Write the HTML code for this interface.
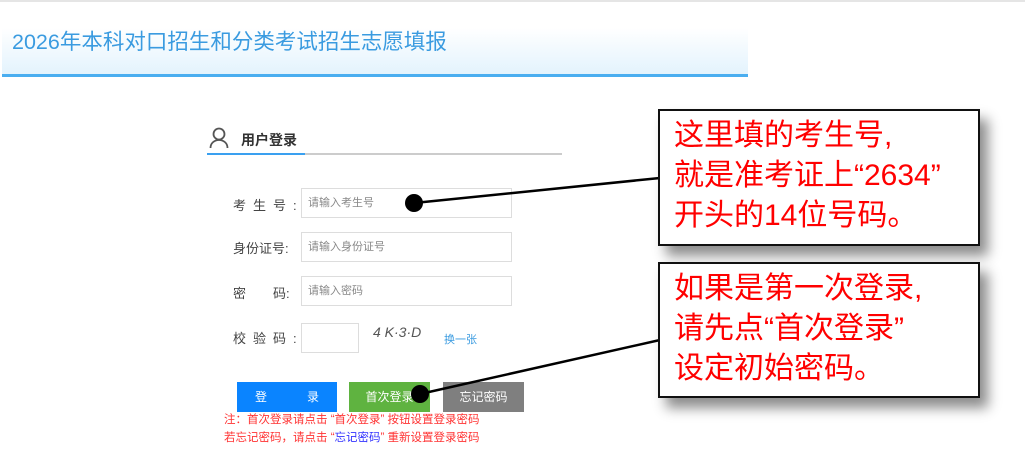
<!DOCTYPE html>
<html><head><meta charset="utf-8"><style>
body{margin:0;width:1025px;height:465px;background:#fff;position:relative;overflow:hidden;font-family:"Liberation Sans","Noto Sans CJK SC",sans-serif}
.a{position:absolute}
.lbl{position:absolute;left:233px;font-size:13px;color:#444}
.inp{position:absolute;left:301px;width:211px;height:30px;border:1px solid #ddd;font-size:11px;color:#888;line-height:28px;padding-left:6px;box-sizing:border-box}
.btn{position:absolute;top:382px;height:30px;color:#fff;font-size:12px;text-align:center;line-height:30px}
.box{position:absolute;left:658px;width:322px;border:2px solid #111;background:#fff;box-shadow:8px 10px 12px rgba(0,0,0,.45);color:#f00;font-size:30px;line-height:40px;padding:5px 0 0 14px;box-sizing:border-box;white-space:nowrap}
</style></head><body>
<div class="a" style="left:0;top:0;width:1025px;height:2px;background:#e5e5e5"></div>
<div class="a" style="left:2px;top:28px;width:746px;height:46px;background:linear-gradient(#fff,#e3f3fd)"></div>
<div class="a" style="left:2px;top:74px;width:746px;height:3px;background:#4aaef0"></div>
<div class="a" style="left:12px;top:25px;font-size:21.5px;color:#3a9be0">2026年本科对口招生和分类考试招生志愿填报</div>
<svg class="a" style="left:209px;top:127px" width="20" height="22" viewBox="0 0 20 22"><circle cx="10" cy="7" r="5.5" fill="none" stroke="#555" stroke-width="1.8"/><path d="M1.5 21c0-5 4-8 8.5-8s8.5 3 8.5 8" fill="none" stroke="#555" stroke-width="1.8"/></svg>
<div class="a" style="left:241px;top:130px;font-size:14px;font-weight:bold;color:#333">用户登录</div>
<div class="a" style="left:207px;top:153px;width:355px;height:2px;background:#ccc"></div>
<div class="a" style="left:207px;top:153px;width:98px;height:2px;background:#3aa0f0"></div>
<div class="lbl" style="top:195px;letter-spacing:7px">考生号:</div>
<div class="lbl" style="top:238px">身份证号:</div>
<div class="lbl" style="top:283px">密<span style="display:inline-block;width:27px"></span>码:</div>
<div class="lbl" style="top:328px;letter-spacing:7px">校验码:</div>
<div class="inp" style="top:188px">请输入考生号</div>
<div class="inp" style="top:232px">请输入身份证号</div>
<div class="inp" style="top:276px">请输入密码</div>
<div class="inp" style="top:323px;width:58px;height:30px"></div>
<div class="a" style="left:373px;top:324px;font-size:14px;color:#555;font-style:italic">4 K·3·D</div>
<div class="a" style="left:444px;top:331px;font-size:11px;color:#3a9be0">换一张</div>
<div class="btn" style="left:237px;width:100px;background:#0a84ff">登<span style="display:inline-block;width:40px"></span>录</div>
<div class="btn" style="left:349px;width:81px;background:#5fb340">首次登录</div>
<div class="btn" style="left:443px;width:81px;background:#7f7f7f">忘记密码</div>
<div class="a" style="left:224px;top:411px;font-size:11.5px;line-height:18px;color:#f33;white-space:nowrap">注：首次登录请点击 “首次登录” 按钮设置登录密码<br>若忘记密码，请点击 “<span style="color:#33f">忘记密码</span>” 重新设置登录密码</div>
<svg class="a" style="left:0;top:0" width="1025" height="465"><line x1="414" y1="203" x2="660" y2="178" stroke="#000" stroke-width="2.5"/><circle cx="414" cy="203" r="9" fill="#000"/><line x1="420" y1="394" x2="660" y2="340" stroke="#000" stroke-width="2.5"/><circle cx="420" cy="394" r="9" fill="#000"/></svg>
<div class="box" style="top:109px;height:137px">这里填的考生号,<br>就是准考证上“2634”<br>开头的14位号码。</div>
<div class="box" style="top:262px;height:136px">如果是第一次登录,<br>请先点“首次登录”<br>设定初始密码。</div>
</body></html>
